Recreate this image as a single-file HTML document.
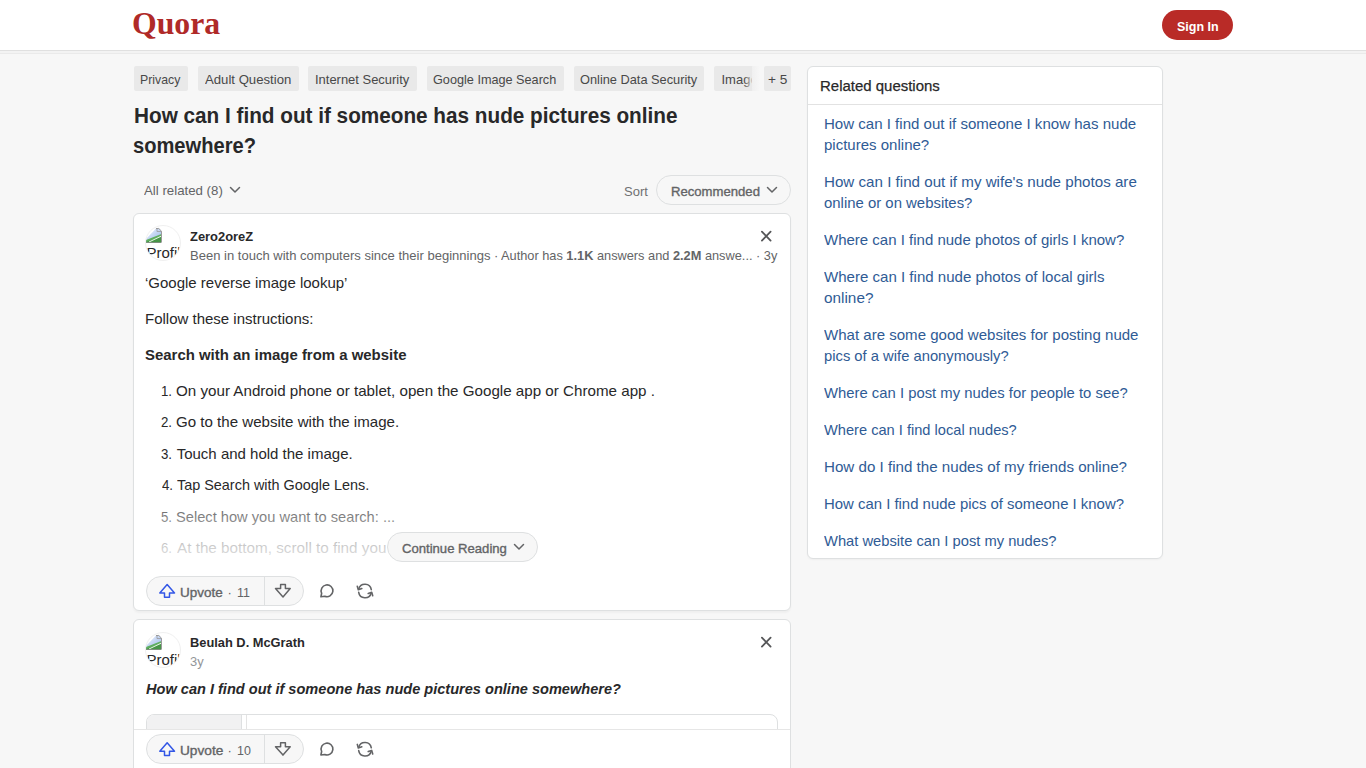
<!DOCTYPE html>
<html><head><meta charset="utf-8">
<style>
*{box-sizing:border-box;margin:0;padding:0}
html,body{width:1366px;height:768px;overflow:hidden}
body{background:#f7f7f7;font-family:"Liberation Sans",sans-serif;color:#282829;position:relative}
.tx{position:absolute;white-space:nowrap;transform-origin:0 0}
.bx{position:absolute}
#hdr{left:0;top:0;width:1366px;height:51px;background:#fff;border-bottom:1px solid #e0e0e0}
#signin{left:1162px;top:10px;width:71px;height:30px;border-radius:15px;background:#b92b27}
.tag{top:66px;height:25px;background:#e9e9e9;border-radius:2px}
.card{background:#fff;border:1px solid #dee0e1;border-radius:6px}
.pill{height:30px;border:1px solid #dee0e1;border-radius:15px;background:#f7f7f7}
.avatar{width:36px;height:36px;border-radius:50%;overflow:hidden;border:1px solid #f0f0f0;background:#fff}
svg{position:absolute;overflow:visible}
</style></head>
<body>
<div class="bx" id="hdr"></div><div class="bx" style="left:0;top:51px;width:1366px;height:2px;background:#f3f3f3"></div><div class="bx" style="left:0;top:53px;width:1366px;height:1px;background:#eaeaea"></div>
<div class="bx" id="signin"></div>

<div class="bx tag" style="left:134px;width:54px"></div>
<div class="bx tag" style="left:198px;width:101px"></div>
<div class="bx tag" style="left:308px;width:109px"></div>
<div class="bx tag" style="left:427px;width:137px"></div>
<div class="bx tag" style="left:574px;width:130px"></div>
<div class="bx tag" style="left:714px;width:40px;overflow:hidden"><div class="tx" style="left:7.5px;top:7.2px;font-size:13px;line-height:13px;color:#484848">Image</div><div style="position:absolute;right:0;top:0;width:10px;height:25px;background:linear-gradient(90deg,rgba(233,233,233,0),#e9e9e9)"></div></div><div class="bx" style="left:752px;top:66px;width:8px;height:25px;background:linear-gradient(90deg,#f0f0f0,#f7f7f7)"></div>
<div class="bx tag" style="left:764px;width:27px"></div>

<!-- all related chevron -->
<svg style="left:229px;top:185px" width="12" height="10" viewBox="0 0 12 10"><path d="M1.5 2.5 L6 7 L10.5 2.5" fill="none" stroke="#636466" stroke-width="1.5" stroke-linecap="round" stroke-linejoin="round"/></svg>
<div class="bx pill" style="left:656px;top:175px;width:135px"></div>
<svg style="left:766px;top:185px" width="12" height="10" viewBox="0 0 12 10"><path d="M1.5 2.5 L6 7 L10.5 2.5" fill="none" stroke="#636466" stroke-width="1.5" stroke-linecap="round" stroke-linejoin="round"/></svg>

<!-- card 1 -->
<div class="bx card" style="left:133px;top:213px;width:658px;height:398px;box-shadow:0 2px 2px rgba(0,0,0,.035)"></div>
<div class="bx avatar" style="left:145px;top:225px"><svg style="left:0;top:1px" width="16" height="16" viewBox="0 0 16 16"><defs><linearGradient id="skyG" x1="0" y1="0" x2="1" y2="1"><stop offset="0" stop-color="#eef3fc"/><stop offset=".6" stop-color="#a9c2ee"/><stop offset="1" stop-color="#7f9fd8"/></linearGradient></defs><path d="M0 15 L0 12 L10 1.5 L13 1.5 L15.5 4 L15.5 15 Z" fill="url(#skyG)" opacity=".8"/><path d="M0 15 L0 13 L15.5 7 L15.5 15 Z" fill="#5fae5f"/><path d="M0 15 L15.5 10 L15.5 15 Z" fill="#3d8a3d" opacity=".7"/><path d="M3 15 L15.5 9" stroke="#e8f5e8" stroke-width="1"/><path d="M10 1.5 L12.8 1.5 L15.5 4.2 L15.5 15" fill="none" stroke="#9a9a9a" stroke-width="1"/><path d="M11 1.8 L11 4.5 L15 4.5" fill="none" stroke="#9a9a9a" stroke-width=".8"/><path d="M0 15.5 L15.5 15.5" stroke="#7d8f7d" stroke-width="1"/></svg><div class="tx" style="left:0.5px;top:18.8px;font-size:15px;line-height:15px;color:#282829;font-family:'Liberation Sans',sans-serif">Profile</div></div>
<svg style="left:761px;top:231px" width="11" height="11" viewBox="0 0 11 11"><path d="M0.9 0.6 L9.6 9.6 M9.6 0.6 L0.9 9.6" stroke="#555658" stroke-width="1.8" stroke-linecap="round"/></svg>
<div class="bx pill" style="left:146px;top:576px;width:158px"></div>
<div class="bx" style="left:264px;top:577px;width:1px;height:28px;background:#dee0e1"></div>

<!-- card 2 -->
<div class="bx card" style="left:133px;top:619px;width:658px;height:200px"></div>
<div class="bx avatar" style="left:145px;top:632px"><svg style="left:0;top:1px" width="16" height="16" viewBox="0 0 16 16"><defs><linearGradient id="skyG2" x1="0" y1="0" x2="1" y2="1"><stop offset="0" stop-color="#eef3fc"/><stop offset=".6" stop-color="#a9c2ee"/><stop offset="1" stop-color="#7f9fd8"/></linearGradient></defs><path d="M0 15 L0 12 L10 1.5 L13 1.5 L15.5 4 L15.5 15 Z" fill="url(#skyG2)" opacity=".8"/><path d="M0 15 L0 13 L15.5 7 L15.5 15 Z" fill="#5fae5f"/><path d="M0 15 L15.5 10 L15.5 15 Z" fill="#3d8a3d" opacity=".7"/><path d="M3 15 L15.5 9" stroke="#e8f5e8" stroke-width="1"/><path d="M10 1.5 L12.8 1.5 L15.5 4.2 L15.5 15" fill="none" stroke="#9a9a9a" stroke-width="1"/><path d="M11 1.8 L11 4.5 L15 4.5" fill="none" stroke="#9a9a9a" stroke-width=".8"/><path d="M0 15.5 L15.5 15.5" stroke="#7d8f7d" stroke-width="1"/></svg><div class="tx" style="left:0.5px;top:18.8px;font-size:15px;line-height:15px;color:#282829;font-family:'Liberation Sans',sans-serif">Profile</div></div>
<svg style="left:761px;top:637px" width="11" height="11" viewBox="0 0 11 11"><path d="M0.9 0.6 L9.6 9.6 M9.6 0.6 L0.9 9.6" stroke="#555658" stroke-width="1.8" stroke-linecap="round"/></svg>
<div class="bx" style="left:146px;top:714px;width:632px;height:60px;border:1px solid #dee0e1;border-radius:8px;overflow:hidden"><div style="position:absolute;left:0;top:0;width:95px;height:60px;background:#f1f1f2;border-right:1px solid #dee0e1"></div><div style="position:absolute;left:99px;top:0;width:1px;height:60px;background:#e4e4e4"></div></div>
<div class="bx" style="left:134px;top:729px;width:656px;height:39px;background:#fff;border-top:1px solid #e6e6e6"></div>
<div class="bx pill" style="left:146px;top:734px;width:158px"></div>
<div class="bx" style="left:264px;top:735px;width:1px;height:28px;background:#dee0e1"></div>

<!-- related -->
<div class="bx card" style="left:807px;top:66px;width:356px;height:493px;box-shadow:0 1px 2px rgba(0,0,0,.04)"></div>
<div class="bx" style="left:808px;top:104px;width:354px;height:1px;background:#e2e2e2"></div>

<div class="tx" id="logo" style="left:132.00px;top:6.71px;font-size:32px;line-height:32px;color:#b02a28;font-weight:bold;font-style:normal;font-family:'Liberation Serif',serif;transform:scaleX(0.9919);">Quora</div>
<div class="tx" id="signintx" style="left:1177.10px;top:20.20px;font-size:13px;line-height:13px;color:#ffffff;font-weight:bold;font-style:normal;font-family:'Liberation Sans',sans-serif;transform:scaleX(0.9622);">Sign In</div>
<div class="tx" id="tg1" style="left:140.38px;top:73.20px;font-size:13px;line-height:13px;color:#484848;font-weight:normal;font-style:normal;font-family:'Liberation Sans',sans-serif;transform:scaleX(0.9458);">Privacy</div>
<div class="tx" id="tg2" style="left:205.00px;top:73.20px;font-size:13px;line-height:13px;color:#484848;font-weight:normal;font-style:normal;font-family:'Liberation Sans',sans-serif;transform:scaleX(1.0120);">Adult Question</div>
<div class="tx" id="tg3" style="left:314.60px;top:73.20px;font-size:13px;line-height:13px;color:#484848;font-weight:normal;font-style:normal;font-family:'Liberation Sans',sans-serif;transform:scaleX(0.9963);">Internet Security</div>
<div class="tx" id="tg4" style="left:433.40px;top:73.20px;font-size:13px;line-height:13px;color:#484848;font-weight:normal;font-style:normal;font-family:'Liberation Sans',sans-serif;transform:scaleX(0.9746);">Google Image Search</div>
<div class="tx" id="tg5" style="left:580.00px;top:73.20px;font-size:13px;line-height:13px;color:#484848;font-weight:normal;font-style:normal;font-family:'Liberation Sans',sans-serif;transform:scaleX(0.9831);">Online Data Security</div>
<div class="tx" id="tg7" style="left:768.00px;top:73.20px;font-size:13px;line-height:13px;color:#484848;font-weight:normal;font-style:normal;font-family:'Liberation Sans',sans-serif;transform:scaleX(1.0516);">+ 5</div>
<div class="tx" id="ti1" style="left:134.30px;top:104.82px;font-size:22px;line-height:22px;color:#282829;font-weight:bold;font-style:normal;font-family:'Liberation Sans',sans-serif;transform:scaleX(0.9420);">How can I find out if someone has nude pictures online</div>
<div class="tx" id="ti2" style="left:132.62px;top:134.66px;font-size:22px;line-height:22px;color:#282829;font-weight:bold;font-style:normal;font-family:'Liberation Sans',sans-serif;transform:scaleX(0.9146);">somewhere?</div>
<div class="tx" id="allrel" style="left:143.62px;top:183.70px;font-size:13px;line-height:13px;color:#636466;font-weight:normal;font-style:normal;font-family:'Liberation Sans',sans-serif;transform:scaleX(1.0193);">All related (8)</div>
<div class="tx" id="sort" style="left:624.00px;top:184.50px;font-size:13px;line-height:13px;color:#6f7072;font-weight:normal;font-style:normal;font-family:'Liberation Sans',sans-serif;transform:scaleX(1.0000);">Sort</div>
<div class="tx" id="recom" style="left:671.00px;top:184.50px;font-size:13px;line-height:13px;color:#636466;font-weight:normal;font-style:normal;font-family:'Liberation Sans',sans-serif;transform:scaleX(1.0090);-webkit-text-stroke:0.35px currentColor;">Recommended</div>
<div class="tx" id="n1" style="left:190.00px;top:230.00px;font-size:13px;line-height:13px;color:#282829;font-weight:bold;font-style:normal;font-family:'Liberation Sans',sans-serif;transform:scaleX(0.9933);">Zero2oreZ</div>
<div class="tx" id="m1a" style="left:189.50px;top:249.00px;font-size:13px;line-height:13px;color:#636466;font-weight:normal;font-style:normal;font-family:'Liberation Sans',sans-serif;transform:scaleX(1.0017);">Been in touch with computers since their beginnings ·</div>
<div class="tx" id="m1b" style="left:501.00px;top:249.00px;font-size:13px;line-height:13px;color:#636466;font-weight:normal;font-style:normal;font-family:'Liberation Sans',sans-serif;transform:scaleX(0.9830);">Author has <b>1.1K</b> answers and <b>2.2M</b> answe... · 3y</div>
<div class="tx" id="p1" style="left:145.00px;top:275.10px;font-size:15px;line-height:15px;color:#282829;font-weight:normal;font-style:normal;font-family:'Liberation Sans',sans-serif;transform:scaleX(0.9991);">‘Google reverse image lookup’</div>
<div class="tx" id="p2" style="left:145.00px;top:310.90px;font-size:15px;line-height:15px;color:#282829;font-weight:normal;font-style:normal;font-family:'Liberation Sans',sans-serif;transform:scaleX(1.0000);">Follow these instructions:</div>
<div class="tx" id="p3" style="left:145.00px;top:347.10px;font-size:15px;line-height:15px;color:#282829;font-weight:bold;font-style:normal;font-family:'Liberation Sans',sans-serif;transform:scaleX(0.9958);">Search with an image from a website</div>
<div class="tx" id="ln1" style="left:161.13px;top:383.10px;font-size:15px;line-height:15px;color:#282829;font-weight:normal;font-style:normal;font-family:'Liberation Sans',sans-serif;transform:scaleX(0.8836);">1.</div>
<div class="tx" id="li1" style="left:175.79px;top:383.10px;font-size:15px;line-height:15px;color:#282829;font-weight:normal;font-style:normal;font-family:'Liberation Sans',sans-serif;transform:scaleX(1.0112);">On your Android phone or tablet, open the Google app or Chrome app .</div>
<div class="tx" id="ln2" style="left:161.13px;top:414.18px;font-size:15px;line-height:15px;color:#282829;font-weight:normal;font-style:normal;font-family:'Liberation Sans',sans-serif;transform:scaleX(0.8836);">2.</div>
<div class="tx" id="li2" style="left:175.79px;top:414.18px;font-size:15px;line-height:15px;color:#282829;font-weight:normal;font-style:normal;font-family:'Liberation Sans',sans-serif;transform:scaleX(1.0062);">Go to the website with the image.</div>
<div class="tx" id="ln3" style="left:161.13px;top:446.00px;font-size:15px;line-height:15px;color:#282829;font-weight:normal;font-style:normal;font-family:'Liberation Sans',sans-serif;transform:scaleX(0.8836);">3.</div>
<div class="tx" id="li3" style="left:176.70px;top:446.00px;font-size:15px;line-height:15px;color:#282829;font-weight:normal;font-style:normal;font-family:'Liberation Sans',sans-serif;transform:scaleX(1.0000);">Touch and hold the image.</div>
<div class="tx" id="ln4" style="left:161.90px;top:477.02px;font-size:15px;line-height:15px;color:#282829;font-weight:normal;font-style:normal;font-family:'Liberation Sans',sans-serif;transform:scaleX(0.8836);">4.</div>
<div class="tx" id="li4" style="left:176.70px;top:477.02px;font-size:15px;line-height:15px;color:#282829;font-weight:normal;font-style:normal;font-family:'Liberation Sans',sans-serif;transform:scaleX(0.9606);">Tap Search with Google Lens.</div>
<div class="tx" id="ln5" style="left:161.13px;top:508.90px;font-size:15px;line-height:15px;color:#282829;font-weight:normal;font-style:normal;font-family:'Liberation Sans',sans-serif;transform:scaleX(0.8836);">5.</div>
<div class="tx" id="li5" style="left:175.79px;top:508.90px;font-size:15px;line-height:15px;color:#282829;font-weight:normal;font-style:normal;font-family:'Liberation Sans',sans-serif;transform:scaleX(0.9769);">Select how you want to search: ...</div>
<div class="tx" id="ln6" style="left:161.13px;top:540.30px;font-size:15px;line-height:15px;color:#282829;font-weight:normal;font-style:normal;font-family:'Liberation Sans',sans-serif;transform:scaleX(0.8836);">6.</div>
<div class="tx" id="li6" style="left:176.70px;top:540.30px;font-size:15px;line-height:15px;color:#282829;font-weight:normal;font-style:normal;font-family:'Liberation Sans',sans-serif;transform:scaleX(1.0168);">At the bottom, scroll to find you</div>
<div class="tx" id="uv1" style="left:180.00px;top:585.60px;font-size:13px;line-height:13px;color:#636466;font-weight:normal;font-style:normal;font-family:'Liberation Sans',sans-serif;transform:scaleX(1.0363);-webkit-text-stroke:0.35px currentColor;">Upvote</div>
<div class="tx" id="uv1d" style="left:227.50px;top:585.60px;font-size:13px;line-height:13px;color:#636466;font-weight:normal;font-style:normal;font-family:'Liberation Sans',sans-serif;transform:scaleX(1.0000);">·</div>
<div class="tx" id="uv1n" style="left:237.00px;top:585.60px;font-size:13px;line-height:13px;color:#636466;font-weight:normal;font-style:normal;font-family:'Liberation Sans',sans-serif;transform:scaleX(0.9572);">11</div>
<div class="tx" id="n2" style="left:189.50px;top:635.80px;font-size:13px;line-height:13px;color:#282829;font-weight:bold;font-style:normal;font-family:'Liberation Sans',sans-serif;transform:scaleX(0.9873);">Beulah D. McGrath</div>
<div class="tx" id="m2" style="left:189.52px;top:654.80px;font-size:13px;line-height:13px;color:#939598;font-weight:normal;font-style:normal;font-family:'Liberation Sans',sans-serif;transform:scaleX(0.9928);">3y</div>
<div class="tx" id="q2" style="left:146.00px;top:681.30px;font-size:15px;line-height:15px;color:#282829;font-weight:bold;font-style:italic;font-family:'Liberation Sans',sans-serif;transform:scaleX(0.9708);">How can I find out if someone has nude pictures online somewhere?</div>
<div class="tx" id="uv2" style="left:180.00px;top:743.80px;font-size:13px;line-height:13px;color:#636466;font-weight:normal;font-style:normal;font-family:'Liberation Sans',sans-serif;transform:scaleX(1.0516);-webkit-text-stroke:0.35px currentColor;">Upvote</div>
<div class="tx" id="uv2d" style="left:227.50px;top:743.80px;font-size:13px;line-height:13px;color:#636466;font-weight:normal;font-style:normal;font-family:'Liberation Sans',sans-serif;transform:scaleX(1.0000);">·</div>
<div class="tx" id="uv2n" style="left:236.50px;top:743.80px;font-size:13px;line-height:13px;color:#636466;font-weight:normal;font-style:normal;font-family:'Liberation Sans',sans-serif;transform:scaleX(0.9573);">10</div>
<div class="tx" id="rqh" style="left:820.00px;top:77.76px;font-size:15.4px;line-height:15.4px;color:#282829;font-weight:normal;font-style:normal;font-family:'Liberation Sans',sans-serif;transform:scaleX(0.9724);-webkit-text-stroke:0.25px currentColor;">Related questions</div>
<div class="tx" id="rq0" style="left:823.60px;top:116.10px;font-size:15px;line-height:15px;color:#2f5b95;font-weight:normal;font-style:normal;font-family:'Liberation Sans',sans-serif;transform:scaleX(1.0036);">How can I find out if someone I know has nude</div>
<div class="tx" id="rq1" style="left:823.60px;top:137.10px;font-size:15px;line-height:15px;color:#2f5b95;font-weight:normal;font-style:normal;font-family:'Liberation Sans',sans-serif;transform:scaleX(1.0014);">pictures online?</div>
<div class="tx" id="rq2" style="left:823.60px;top:174.10px;font-size:15px;line-height:15px;color:#2f5b95;font-weight:normal;font-style:normal;font-family:'Liberation Sans',sans-serif;transform:scaleX(1.0101);">How can I find out if my wife's nude photos are</div>
<div class="tx" id="rq3" style="left:823.60px;top:195.10px;font-size:15px;line-height:15px;color:#2f5b95;font-weight:normal;font-style:normal;font-family:'Liberation Sans',sans-serif;transform:scaleX(0.9941);">online or on websites?</div>
<div class="tx" id="rq4" style="left:823.60px;top:232.10px;font-size:15px;line-height:15px;color:#2f5b95;font-weight:normal;font-style:normal;font-family:'Liberation Sans',sans-serif;transform:scaleX(1.0004);">Where can I find nude photos of girls I know?</div>
<div class="tx" id="rq5" style="left:823.60px;top:269.10px;font-size:15px;line-height:15px;color:#2f5b95;font-weight:normal;font-style:normal;font-family:'Liberation Sans',sans-serif;transform:scaleX(1.0040);">Where can I find nude photos of local girls</div>
<div class="tx" id="rq6" style="left:823.60px;top:290.10px;font-size:15px;line-height:15px;color:#2f5b95;font-weight:normal;font-style:normal;font-family:'Liberation Sans',sans-serif;transform:scaleX(1.0218);">online?</div>
<div class="tx" id="rq7" style="left:823.60px;top:327.10px;font-size:15px;line-height:15px;color:#2f5b95;font-weight:normal;font-style:normal;font-family:'Liberation Sans',sans-serif;transform:scaleX(1.0031);">What are some good websites for posting nude</div>
<div class="tx" id="rq8" style="left:823.60px;top:348.10px;font-size:15px;line-height:15px;color:#2f5b95;font-weight:normal;font-style:normal;font-family:'Liberation Sans',sans-serif;transform:scaleX(0.9846);">pics of a wife anonymously?</div>
<div class="tx" id="rq9" style="left:823.60px;top:385.10px;font-size:15px;line-height:15px;color:#2f5b95;font-weight:normal;font-style:normal;font-family:'Liberation Sans',sans-serif;transform:scaleX(0.9896);">Where can I post my nudes for people to see?</div>
<div class="tx" id="rq10" style="left:823.60px;top:422.10px;font-size:15px;line-height:15px;color:#2f5b95;font-weight:normal;font-style:normal;font-family:'Liberation Sans',sans-serif;transform:scaleX(0.9752);">Where can I find local nudes?</div>
<div class="tx" id="rq11" style="left:823.60px;top:459.10px;font-size:15px;line-height:15px;color:#2f5b95;font-weight:normal;font-style:normal;font-family:'Liberation Sans',sans-serif;transform:scaleX(1.0094);">How do I find the nudes of my friends online?</div>
<div class="tx" id="rq12" style="left:823.60px;top:496.10px;font-size:15px;line-height:15px;color:#2f5b95;font-weight:normal;font-style:normal;font-family:'Liberation Sans',sans-serif;transform:scaleX(0.9937);">How can I find nude pics of someone I know?</div>
<div class="tx" id="rq13" style="left:823.60px;top:533.10px;font-size:15px;line-height:15px;color:#2f5b95;font-weight:normal;font-style:normal;font-family:'Liberation Sans',sans-serif;transform:scaleX(0.9819);">What website can I post my nudes?</div>
<svg style="left:0;top:0" width="1366" height="768" viewBox="0 0 1366 768">
<g fill="none" stroke-linejoin="round" stroke-linecap="round">
 <path id="upA" d="M167.15 584.6 L159.8 593 L164.5 593 L164.5 597.3 L169.5 597.3 L169.5 593 L174.5 593 Z" stroke="#3357e6" stroke-width="1.5"/>
 <path d="M280.6 584.6 L285.4 584.6 L285.4 588.6 L290.2 588.6 L283 596.9 L275.5 588.6 L280.6 588.6 Z" stroke="#636466" stroke-width="1.5"/>
 <path d="M324.79 596.27 L320.9 596.8 L321.65 593.29 A5.9 5.9 0 1 1 324.79 596.27 Z" stroke="#636466" stroke-width="1.6"/>
 <path d="M358.8 589 A6.4 6.4 0 0 1 371.3 589.6" stroke="#636466" stroke-width="1.6"/>
 <path d="M357.3 586.2 L358.3 589.8 L361.8 588.6" stroke="#636466" stroke-width="1.6"/>
 <path d="M371.2 593 A6.4 6.4 0 0 1 358.7 592.4" stroke="#636466" stroke-width="1.6"/>
 <path d="M372.7 595.8 L371.7 592.2 L368.2 593.4" stroke="#636466" stroke-width="1.6"/>
 <g transform="translate(0 158.2)">
 <path d="M167.15 584.6 L159.8 593 L164.5 593 L164.5 597.3 L169.5 597.3 L169.5 593 L174.5 593 Z" stroke="#3357e6" stroke-width="1.5"/>
 <path d="M280.6 584.6 L285.4 584.6 L285.4 588.6 L290.2 588.6 L283 596.9 L275.5 588.6 L280.6 588.6 Z" stroke="#636466" stroke-width="1.5"/>
 <path d="M324.79 596.27 L320.9 596.8 L321.65 593.29 A5.9 5.9 0 1 1 324.79 596.27 Z" stroke="#636466" stroke-width="1.6"/>
 <path d="M358.8 589 A6.4 6.4 0 0 1 371.3 589.6" stroke="#636466" stroke-width="1.6"/>
 <path d="M357.3 586.2 L358.3 589.8 L361.8 588.6" stroke="#636466" stroke-width="1.6"/>
 <path d="M371.2 593 A6.4 6.4 0 0 1 358.7 592.4" stroke="#636466" stroke-width="1.6"/>
 <path d="M372.7 595.8 L371.7 592.2 L368.2 593.4" stroke="#636466" stroke-width="1.6"/>
 </g>
</g></svg>
<div class="bx" style="left:134px;top:488px;width:656px;height:80px;background:linear-gradient(180deg,rgba(255,255,255,0) 0%,rgba(255,255,255,.41) 35%,rgba(255,255,255,.78) 75%,rgba(255,255,255,.92) 100%)"></div>
<div class="bx pill" style="left:387px;top:532px;width:151px;height:30px;background:#f7f7f7"></div>
<svg style="left:513px;top:542px" width="12" height="10" viewBox="0 0 12 10"><path d="M1.5 2.5 L6 7 L10.5 2.5" fill="none" stroke="#636466" stroke-width="1.5" stroke-linecap="round" stroke-linejoin="round"/></svg>
<div class="tx" id="cr" style="left:401.62px;top:541.50px;font-size:13px;line-height:13px;color:#636466;font-weight:normal;font-style:normal;font-family:'Liberation Sans',sans-serif;transform:scaleX(1.0076);-webkit-text-stroke:0.35px currentColor;">Continue Reading</div>

</body></html>
